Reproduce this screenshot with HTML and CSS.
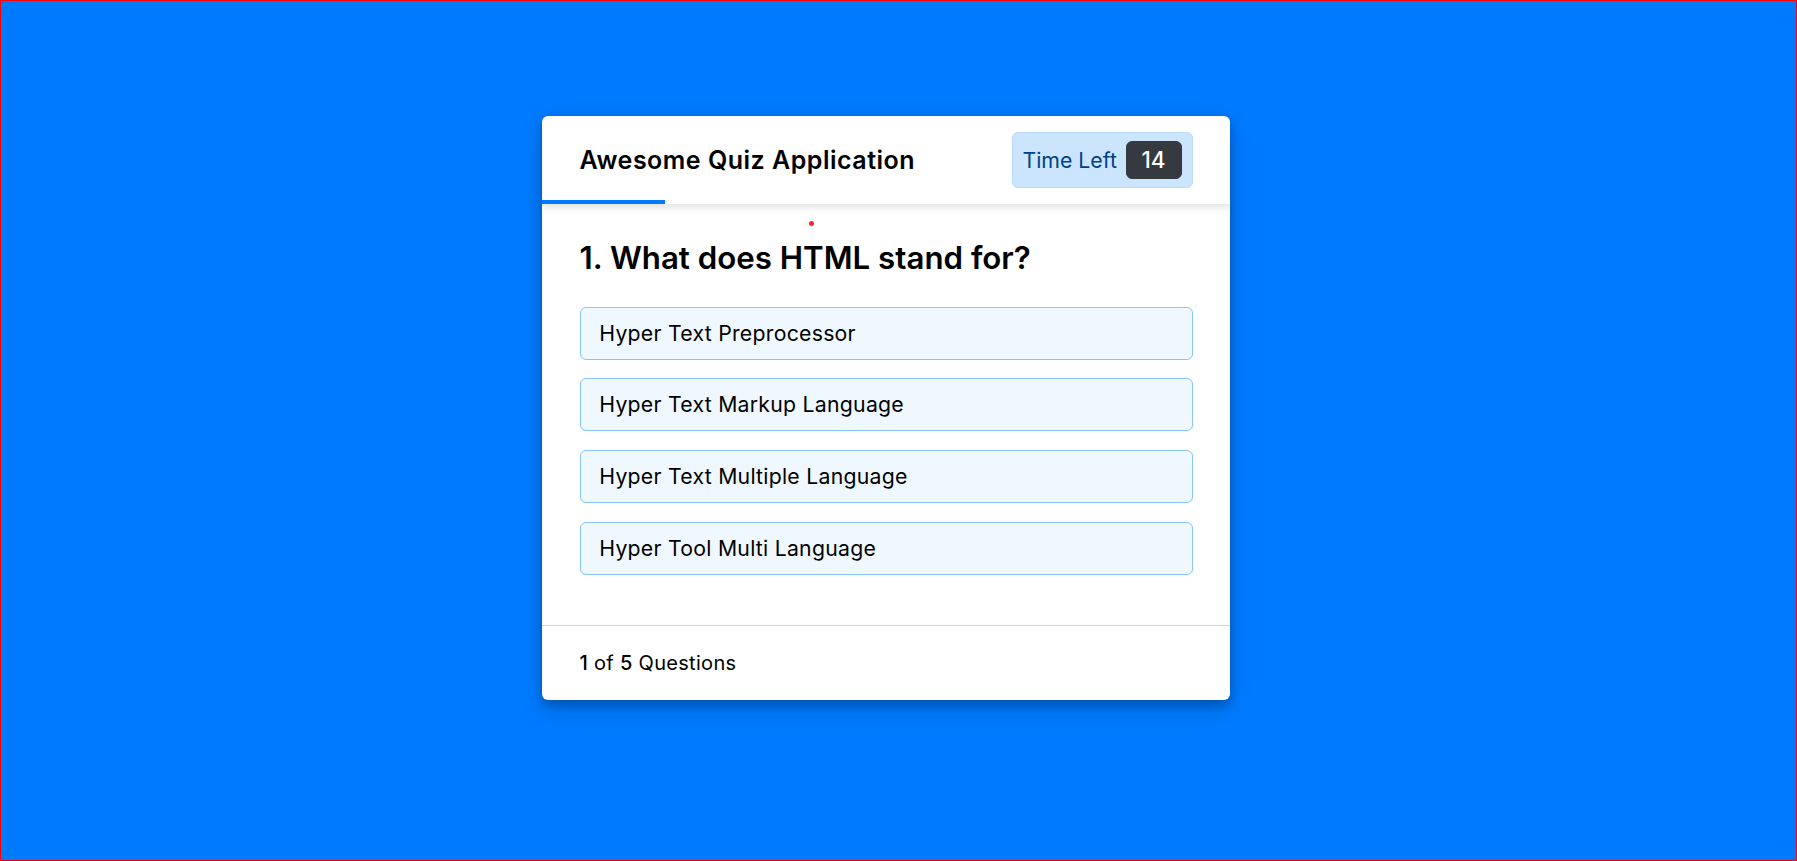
FILE: index.html
```html
<!DOCTYPE html>
<html lang="en">
<head>
<meta charset="utf-8">
<title>Awesome Quiz Application</title>
<link rel="stylesheet" href="styles.css">
</head>
<body>
<div class="page">
  <div class="quiz-box">
    <header class="quiz-header">
      <div class="title">Awesome Quiz Application</div>
      <div class="timer">
        <div class="time-left-txt">Time Left</div>
        <div class="time-sec">14</div>
      </div>
      <div class="time-line"></div>
    </header>
    <section class="quiz-body">
      <div class="que-text">1. What does HTML stand for?</div>
      <div class="option-list">
        <div class="option">Hyper Text Preprocessor</div>
        <div class="option">Hyper Text Markup Language</div>
        <div class="option">Hyper Text Multiple Language</div>
        <div class="option">Hyper Tool Multi Language</div>
      </div>
      <span class="dot"></span>
    </section>
    <footer class="quiz-footer">
      <span class="total-que"><b>1</b> of <b>5</b> Questions</span>
    </footer>
  </div>
</div>
</body>
</html>
```

FILE: styles.css
```css
* { margin: 0; padding: 0; box-sizing: border-box; }
html, body { height: 100%; }
body {
  background: #007bff;
  border: 1px solid #ff0000;
  font-family: Inter, "Noto Sans", sans-serif;
  overflow: hidden;
}
.page {
  padding-top: 115px;
  padding-left: 541px;
}
.quiz-box {
  width: 688px;
  background: #fff;
  border-radius: 6px;
  box-shadow: 0 5px 10px 0 rgba(0,0,0,0.2), 0 7.5px 25px 0 rgba(0,0,0,0.19);
  overflow: hidden;
}
.quiz-header {
  position: relative;
  height: 87.5px;
  padding: 0 37.5px;
  display: flex;
  align-items: center;
  justify-content: space-between;
  box-shadow: 0 3.75px 6.25px 1.25px rgba(0,0,0,0.1);
  z-index: 1;
}
.title { font-size: 25px; font-weight: 600; color: #000; letter-spacing: 0.5px; }
.timer {
  width: 181px; height: 56px;
  background: #cce5ff;
  border: 1px solid #b8daff;
  border-radius: 6px;
  padding: 0 10px;
  display: flex; align-items: center; justify-content: space-between;
  color: #004085;
}
.time-left-txt { font-size: 21.25px; font-weight: 400; }
.time-sec {
  width: 56px; height: 37.5px;
  background: #343a40; border: 1px solid #343a40; border-radius: 6px;
  color: #fff; font-size: 22.5px; font-weight: 500;
  display: flex; align-items: center; justify-content: center;
}
.time-line {
  position: absolute; left: 0; bottom: 0;
  width: 123px; height: 3.75px; background: #007bff;
}
.quiz-body { position: relative; padding: 31.25px 37.5px 25px; }
.que-text { font-size: 31.25px; font-weight: 600; color: #000; line-height: 46.9px; }
.option-list { padding: 25px 0; }
.option {
  background: aliceblue;
  border: 1px solid #84c5fe;
  border-radius: 6px;
  padding: 10px 18.75px;
  font-size: 21.25px;
  line-height: 31px;
  letter-spacing: 0.25px;
  margin-bottom: 18.75px;
  color: #000;
}
.option:last-child { margin-bottom: 0; }
.dot {
  position: absolute; left: 267px; top: 17px;
  width: 5px; height: 5px; border-radius: 50%; background: #ee2a2a;
}
.quiz-footer {
  height: 75px; padding: 0 37.5px;
  border-top: 1px solid #d3d3d3;
  display: flex; align-items: center;
}
.total-que { font-size: 20px; color: #000; letter-spacing: 0.3px; }
.total-que b { font-weight: 500; }
```
